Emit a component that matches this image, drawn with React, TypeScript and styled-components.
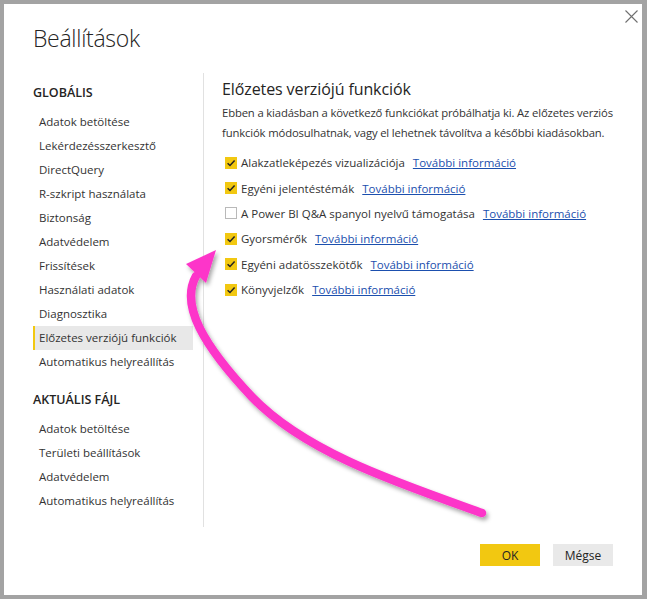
import styled, { createGlobalStyle } from "styled-components";

const GlobalStyle = createGlobalStyle`
  html, body {
    margin: 0;
    padding: 0;
    background: #a3a3a3;
  }
  body {
    font-family: "Open Sans", "Noto Sans", sans-serif;
  }
`;

const Colors = {
  frame: "#a3a3a3",
  text: "#252423",
  itemText: "#333333",
  divider: "#e1e1e1",
  selected: "#e8e8e8",
  yellow: "#f2c811",
  link: "#1b4fae",
  cancel: "#e9e9e9",
  arrow: "#fd36c9",
};

type Feature = { label: string; checked: boolean };

const globalItems = [
  "Adatok betöltése",
  "Lekérdezésszerkesztő",
  "DirectQuery",
  "R-szkript használata",
  "Biztonság",
  "Adatvédelem",
  "Frissítések",
  "Használati adatok",
  "Diagnosztika",
  "Előzetes verziójú funkciók",
  "Automatikus helyreállítás",
];

const fileItems = [
  "Adatok betöltése",
  "Területi beállítások",
  "Adatvédelem",
  "Automatikus helyreállítás",
];

const features: Feature[] = [
  { label: "Alakzatleképezés vizualizációja", checked: true },
  { label: "Egyéni jelentéstémák", checked: true },
  { label: "A Power BI Q&A spanyol nyelvű támogatása", checked: false },
  { label: "Gyorsmérők", checked: true },
  { label: "Egyéni adatösszekötők", checked: true },
  { label: "Könyvjelzők", checked: true },
];

const CheckMark = () => (
  <svg width="12" height="12" viewBox="0 0 12 12">
    <path d="M2.6 6.2 L5 8.5 L9.6 3.4" fill="none" stroke="#252423" strokeWidth="1.5" />
  </svg>
);

const CloseIcon = () => (
  <svg width="13" height="13" viewBox="0 0 13 13">
    <path d="M0.5 0.5 L12.5 12.5 M12.5 0.5 L0.5 12.5" stroke="#6f6f6f" strokeWidth="1.1" />
  </svg>
);

const PinkArrow = () => (
  <ArrowLayer width="647" height="599" viewBox="0 0 647 599">
    <defs>
      <filter id="arrowShadow" x="-20%" y="-20%" width="140%" height="140%">
        <feDropShadow dx="2" dy="3" stdDeviation="2" floodColor="#000" floodOpacity="0.35" />
      </filter>
    </defs>
    <g filter="url(#arrowShadow)">
      <path
        d="M482 513 C395 482 305 452 252 397 C203 345 180 305 196 276"
        fill="none"
        stroke={Colors.arrow}
        strokeWidth="8.5"
        strokeLinecap="round"
      />
      <polygon points="186,264 216,250 206,283" fill={Colors.arrow} />
    </g>
  </ArrowLayer>
);

export default function App() {
  return (
    <>
      <GlobalStyle />
      <Frame>
        <Dialog>
          <CloseButton aria-label="Bezárás">
            <CloseIcon />
          </CloseButton>
          <Title>Beállítások</Title>
          <Body>
            <Sidebar>
              <SectionHeading>GLOBÁLIS</SectionHeading>
              <NavList>
                {globalItems.map((item) => (
                  <NavItem key={item} $active={item === "Előzetes verziójú funkciók"}>
                    {item}
                  </NavItem>
                ))}
              </NavList>
              <SectionHeading $spaced>AKTUÁLIS FÁJL</SectionHeading>
              <NavList>
                {fileItems.map((item) => (
                  <NavItem key={item}>{item}</NavItem>
                ))}
              </NavList>
            </Sidebar>
            <Content>
              <ContentHeading>Előzetes verziójú funkciók</ContentHeading>
              <Description>
                Ebben a kiadásban a következő funkciókat próbálhatja ki. Az előzetes verziós
                <br />
                funkciók módosulhatnak, vagy el lehetnek távolítva a későbbi kiadásokban.
              </Description>
              <FeatureList>
                {features.map((f) => (
                  <FeatureRow key={f.label}>
                    <Checkbox $checked={f.checked}>{f.checked && <CheckMark />}</Checkbox>
                    <FeatureLabel>{f.label}</FeatureLabel>
                    <MoreLink href="#">További információ</MoreLink>
                  </FeatureRow>
                ))}
              </FeatureList>
            </Content>
          </Body>
          <Footer>
            <Button $primary>OK</Button>
            <Button>Mégse</Button>
          </Footer>
          <PinkArrow />
        </Dialog>
      </Frame>
    </>
  );
}

const Frame = styled.div`
  width: 647px;
  height: 599px;
  box-sizing: border-box;
  border-style: solid;
  border-color: ${Colors.frame};
  border-width: 4px 5px 4px 4px;
  background: white;
`;

const Dialog = styled.div`
  position: relative;
  height: 100%;
  display: flex;
  flex-direction: column;
  color: ${Colors.text};
`;

const CloseButton = styled.button`
  position: absolute;
  top: 6px;
  right: 4px;
  width: 13px;
  height: 13px;
  padding: 0;
  border: none;
  background: none;
  display: flex;
`;

const Title = styled.h1`
  margin: 0;
  padding: 18px 0 0 29px;
  height: 69px;
  box-sizing: border-box;
  font-weight: 300;
  font-size: 23px;
  letter-spacing: -0.3px;
  line-height: 32px;
  color: ${Colors.text};
`;

const Body = styled.div`
  display: flex;
  height: 454px;
`;

const Sidebar = styled.nav`
  width: 200px;
  flex-shrink: 0;
  box-sizing: border-box;
  padding: 11px 10px 0 29px;
  border-right: 1px solid ${Colors.divider};
`;

const SectionHeading = styled.div<{ $spaced?: boolean }>`
  font-size: 12.5px;
  font-weight: 600;
  line-height: 18px;
  margin: ${(p) => (p.$spaced ? "17px" : "0")} 0 8px 0;
  color: ${Colors.text};
`;

const NavList = styled.div`
  display: flex;
  flex-direction: column;
`;

const NavItem = styled.div<{ $active?: boolean }>`
  height: 24px;
  line-height: 24px;
  font-size: 11.5px;
  padding-left: 6px;
  color: ${Colors.itemText};
  background: ${(p) => (p.$active ? Colors.selected : "transparent")};
  box-shadow: ${(p) => (p.$active ? `inset 2px 0 0 ${Colors.yellow}` : "none")};
  white-space: nowrap;
`;

const Content = styled.section`
  flex: 1;
  min-width: 0;
  padding: 5px 0 0 18px;
`;

const ContentHeading = styled.h2`
  margin: 0 0 3px;
  font-size: 16px;
  font-weight: 400;
  letter-spacing: -0.1px;
  line-height: 22px;
  color: ${Colors.text};
`;

const Description = styled.p`
  margin: 0 0 7px;
  font-size: 11.3px;
  letter-spacing: -0.15px;
  line-height: 20px;
  color: ${Colors.itemText};
  white-space: nowrap;
`;

const FeatureList = styled.div`
  display: flex;
  flex-direction: column;
`;

const FeatureRow = styled.div`
  display: flex;
  align-items: center;
  height: 25.4px;
  padding-left: 3px;
  font-size: 11.5px;
  white-space: nowrap;
`;

const Checkbox = styled.span<{ $checked: boolean }>`
  width: 12px;
  height: 12px;
  box-sizing: border-box;
  margin-right: 4px;
  display: flex;
  background: ${(p) => (p.$checked ? Colors.yellow : "white")};
  border: ${(p) => (p.$checked ? "none" : "1px solid #b9b9b9")};
`;

const FeatureLabel = styled.span`
  color: ${Colors.itemText};
  margin-right: 8px;
`;

const MoreLink = styled.a`
  color: ${Colors.link};
  text-decoration: underline;
`;

const Footer = styled.div`
  flex: 1;
  display: flex;
  justify-content: flex-end;
  align-items: flex-start;
  gap: 13px;
  padding: 17px 29px 0 0;
`;

const Button = styled.button<{ $primary?: boolean }>`
  width: 60px;
  height: 22px;
  border: none;
  padding: 0;
  font-family: "Open Sans", "Noto Sans", sans-serif;
  font-size: 12px;
  color: ${Colors.text};
  background: ${(p) => (p.$primary ? Colors.yellow : Colors.cancel)};
`;

const ArrowLayer = styled.svg`
  position: absolute;
  left: -4px;
  top: -4px;
  pointer-events: none;
  overflow: visible;
`;
